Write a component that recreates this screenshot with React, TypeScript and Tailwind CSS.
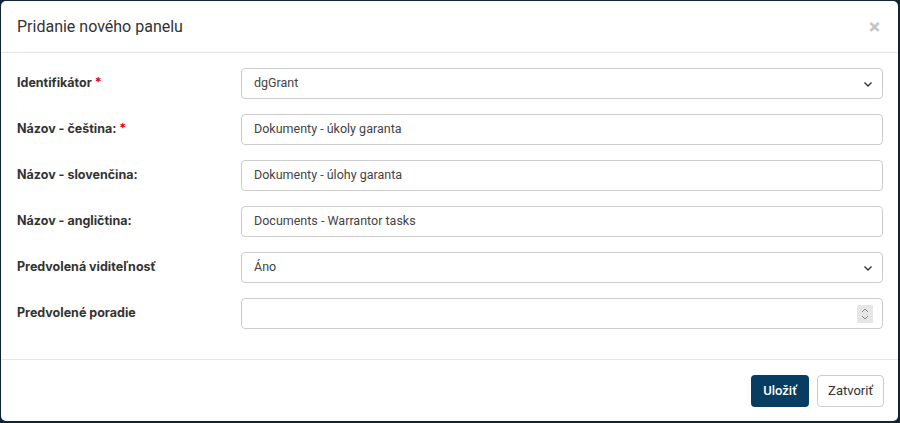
import React from "react";

type Field = {
  label: string;
  required?: boolean;
  kind: "select" | "text" | "number";
  value: string;
};

const fields: Field[] = [
  { label: "Identifikátor", required: true, kind: "select", value: "dgGrant" },
  { label: "Názov - čeština:", required: true, kind: "text", value: "Dokumenty - úkoly garanta" },
  { label: "Názov - slovenčina:", kind: "text", value: "Dokumenty - úlohy garanta" },
  { label: "Názov - angličtina:", kind: "text", value: "Documents - Warrantor tasks" },
  { label: "Predvolená viditeľnosť", kind: "select", value: "Áno" },
  { label: "Predvolené poradie", kind: "number", value: "" },
];

function Chevron() {
  return (
    <svg width="10" height="10" viewBox="0 0 10 10" className="text-[#333]">
      <path d="M1.5 3.5 L5 7 L8.5 3.5" fill="none" stroke="currentColor" strokeWidth="1.4" />
    </svg>
  );
}

function Spinner() {
  return (
    <div className="flex h-[18px] w-[16px] flex-col items-center justify-center gap-[2px] bg-[#e6e6e6]">
      <svg width="8" height="5" viewBox="0 0 8 5">
        <path d="M1 4 L4 1 L7 4" fill="none" stroke="#888" strokeWidth="1" />
      </svg>
      <svg width="8" height="5" viewBox="0 0 8 5">
        <path d="M1 1 L4 4 L7 1" fill="none" stroke="#888" strokeWidth="1" />
      </svg>
    </div>
  );
}

function Control({ field }: { field: Field }) {
  return (
    <div className="flex h-[31px] items-center justify-between rounded-[4px] border border-[#ccc] bg-white pl-3 pr-[9px] font-['Roboto',sans-serif] text-[12.5px] text-[#444]">
      <span>{field.value}</span>
      {field.kind === "select" && <Chevron />}
      {field.kind === "number" && <Spinner />}
    </div>
  );
}

export default function App() {
  return (
    <div
      className="h-[423px] w-[900px] bg-[#0d2535] pl-[1px] pt-[1px]"
      style={{ fontFamily: "Inter, 'Noto Sans', sans-serif" }}
    >
      <div className="flex h-[420px] w-[897px] flex-col overflow-hidden rounded-[5px] bg-white">
        {/* Header */}
        <div className="flex h-[52px] items-center justify-between border-b border-[#e5e5e5] pl-4 pr-[15px]">
          <h4 className="font-['Roboto',sans-serif] text-[16px] text-[#333]">Pridanie nového panelu</h4>
          <span className="pr-[2px] text-[19px] font-bold leading-none text-[#c4c4c4]">×</span>
        </div>

        {/* Body */}
        <div className="flex flex-col gap-[15px] pb-[30px] pl-4 pr-[15px] pt-[15px]">
          {fields.map((f) => (
            <div key={f.label} className="grid grid-cols-[224px_1fr] items-center">
              <label className="text-[12.5px] font-bold text-[#333]">
                {f.label}
                {f.required && <span className="text-[#e00]"> *</span>}
              </label>
              <Control field={f} />
            </div>
          ))}
        </div>

        {/* Footer */}
        <div className="flex flex-1 items-start justify-end gap-2 border-t border-[#e5e5e5] pr-[14px] pt-[15px] font-['Roboto',sans-serif]">
          <button className="h-[32px] w-[58px] rounded-[4px] bg-[#073d61] text-[13px] font-medium text-white">
            Uložiť
          </button>
          <button className="h-[32px] w-[67px] rounded-[4px] border border-[#ccc] bg-white text-[13px] text-[#333]">
            Zatvoriť
          </button>
        </div>
      </div>
    </div>
  );
}
